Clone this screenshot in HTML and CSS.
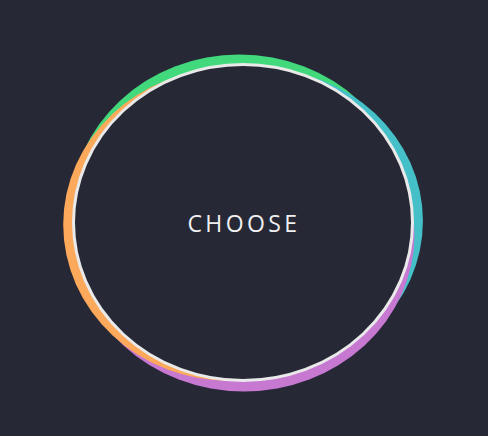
FILE: index.html
```html
<!DOCTYPE html>
<html lang="en">
<head>
<meta charset="utf-8">
<title>Choose</title>
<link rel="stylesheet" href="styles.css">
</head>
<body>
<main class="stage">
  <div class="blob">
    <svg class="rings" width="488" height="436" viewBox="0 0 488 436" aria-hidden="true">
      <ellipse class="ring-green" cx="239.5" cy="212" rx="169" ry="157.5"/>
      <ellipse class="ring-teal" cx="258.94" cy="221.1" rx="164" ry="152.5"/>
      <ellipse class="ring-purple" cx="244" cy="234.45" rx="170.5" ry="157"/>
      <ellipse class="ring-orange" cx="231.2" cy="224.58" rx="168" ry="156.5"/>
      <ellipse class="ring-white" cx="243" cy="222.5" rx="169.5" ry="158"/>
    </svg>
    <button class="choose" type="button">CHOOSE</button>
  </div>
</main>
</body>
</html>
```
FILE: styles.css
```css
html, body {
  margin: 0;
  padding: 0;
  background: #262835;
}
.stage {
  width: 488px;
  height: 436px;
  position: relative;
  overflow: hidden;
}
.blob {
  width: 488px;
  height: 436px;
  display: flex;
  align-items: center;
  justify-content: center;
}
.rings {
  position: absolute;
  left: 0;
  top: 0;
}
.ring-green { fill: #41d97c; }
.ring-teal { fill: #45c0c8; }
.ring-purple { fill: #c778d1; }
.ring-orange { fill: #fca95b; }
.ring-white { fill: #262835; stroke: #e9e9ea; stroke-width: 3; }
.choose {
  position: relative;
  background: none;
  border: 0;
  padding: 0;
  margin: 10px 0 0 0;
  color: #f0f0f2;
  font-family: "Open Sans", sans-serif;
  font-size: 23px;
  letter-spacing: 3.4px;
  line-height: 1;
}
```
